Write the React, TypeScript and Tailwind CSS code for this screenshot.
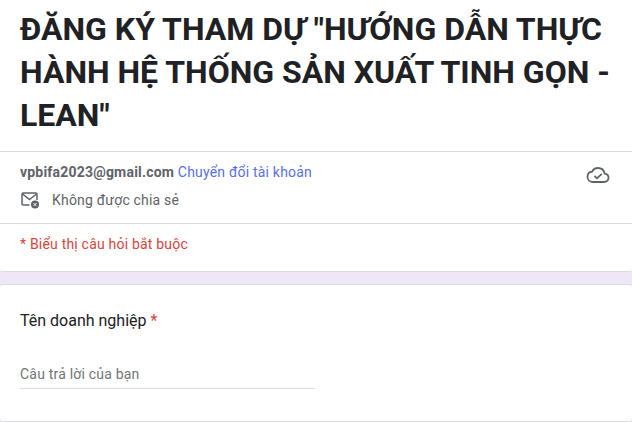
export default function App() {
  return (
    <div className="h-[422px] overflow-hidden bg-[#ede7f6] font-['Roboto',sans-serif]">
      <div className="bg-white border-b border-[#dadce0] rounded-b-[3px] h-[272px]">
        <div className="px-5 pt-2 h-[152px] border-b border-[#dadce0]">
          <h1 className="text-[32px] leading-[43px] font-bold text-[#202124]">
            ĐĂNG KÝ THAM DỰ "HƯỚNG DẪN THỰC HÀNH HỆ THỐNG SẢN XUẤT TINH GỌN - LEAN"
          </h1>
        </div>
        <div className="h-[72px] border-b border-[#dadce0] px-5 flex justify-between">
          <div className="tracking-[0.2px]">
            <div className="text-sm leading-5 mt-[10px]">
              <span className="font-bold text-[#5f6368]">vpbifa2023@gmail.com</span>{" "}
              <span className="text-[#5a6fe0]">Chuyển đổi tài khoản</span>
            </div>
            <div className="flex items-center mt-2 h-5">
              <svg width="20" height="20" viewBox="0 0 20 20" fill="none" className="mr-3">
                <path d="M9.5 15H3.2C2.5 15 2 14.5 2 13.8V4.2C2 3.5 2.5 3 3.2 3H15.8C16.5 3 17 3.5 17 4.2V10" stroke="#5f6368" strokeWidth="1.5" />
                <path d="M2.5 4L9.5 9.5L16.5 4" stroke="#5f6368" strokeWidth="1.5" />
                <circle cx="15" cy="14.5" r="4" fill="#5f6368" />
                <path d="M13.5 13L16.5 16M16.5 13L13.5 16" stroke="#fff" strokeWidth="1" />
              </svg>
              <span className="text-sm text-[#5f6368]">Không được chia sẻ</span>
            </div>
          </div>
          <svg width="24" height="24" viewBox="0 0 24 24" fill="none" className="mt-[11px] mr-[2px]">
            <path d="M6.5 19H18C20.5 19 22.5 17.2 22.5 14.8C22.5 12.5 20.8 10.8 18.7 10.6C18 7.4 15.3 5 12 5C9.4 5 7.2 6.4 6.1 8.6C3.4 8.9 1.5 11.1 1.5 13.8C1.5 16.7 3.7 19 6.5 19Z" stroke="#5f6368" strokeWidth="1.8" />
            <path d="M8.5 13L11 15.3L15.8 10.8" stroke="#5f6368" strokeWidth="1.8" />
          </svg>
        </div>
        <div className="px-5 pt-[10px] text-sm leading-5 tracking-[0.2px] text-[#d5453b]">* Biểu thị câu hỏi bắt buộc</div>
      </div>
      <div className="mt-3 bg-white border-y border-[#dadce0] rounded-[3px] h-[138px] px-5 pt-6">
        <div className="text-base leading-6 text-[#202124]">
          Tên doanh nghiệp <span className="text-[#d5453b]">*</span>
        </div>
        <div className="w-[295px] mt-[21px] h-[35px] border-b border-[#dadce0] text-sm tracking-[0.2px] leading-[41px] text-[#70757a]">
          Câu trả lời của bạn
        </div>
      </div>
    </div>
  );
}
